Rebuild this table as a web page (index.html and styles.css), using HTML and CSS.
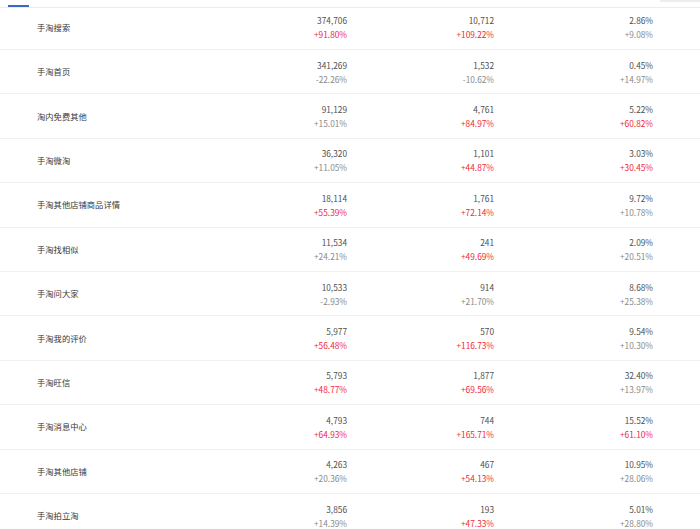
FILE: index.html
```html
<!DOCTYPE html>
<html lang="zh-CN">
<head>
<meta charset="utf-8">
<title>流量来源</title>
<link rel="stylesheet" href="styles.css">
</head>
<body>
<div class="page">
  <div class="tabbar">
    <div class="tab-active"></div>
    <div class="tool-edge"></div>
  </div>
  <div class="rows">
    <div class="row row-first">
      <div class="label">手淘搜索</div>
      <div class="cell"><span class="num">374,706</span><span class="pct up">+91.80%</span></div>
      <div class="cell"><span class="num">10,712</span><span class="pct up">+109.22%</span></div>
      <div class="cell"><span class="num">2.86%</span><span class="pct">+9.08%</span></div>
    </div>
    <div class="row">
      <div class="label">手淘首页</div>
      <div class="cell"><span class="num">341,269</span><span class="pct">-22.26%</span></div>
      <div class="cell"><span class="num">1,532</span><span class="pct">-10.62%</span></div>
      <div class="cell"><span class="num">0.45%</span><span class="pct">+14.97%</span></div>
    </div>
    <div class="row">
      <div class="label">淘内免费其他</div>
      <div class="cell"><span class="num">91,129</span><span class="pct">+15.01%</span></div>
      <div class="cell"><span class="num">4,761</span><span class="pct up">+84.97%</span></div>
      <div class="cell"><span class="num">5.22%</span><span class="pct up">+60.82%</span></div>
    </div>
    <div class="row">
      <div class="label">手淘微淘</div>
      <div class="cell"><span class="num">36,320</span><span class="pct">+11.05%</span></div>
      <div class="cell"><span class="num">1,101</span><span class="pct up">+44.87%</span></div>
      <div class="cell"><span class="num">3.03%</span><span class="pct up">+30.45%</span></div>
    </div>
    <div class="row">
      <div class="label">手淘其他店铺商品详情</div>
      <div class="cell"><span class="num">18,114</span><span class="pct up">+55.39%</span></div>
      <div class="cell"><span class="num">1,761</span><span class="pct up">+72.14%</span></div>
      <div class="cell"><span class="num">9.72%</span><span class="pct">+10.78%</span></div>
    </div>
    <div class="row">
      <div class="label">手淘找相似</div>
      <div class="cell"><span class="num">11,534</span><span class="pct">+24.21%</span></div>
      <div class="cell"><span class="num">241</span><span class="pct up">+49.69%</span></div>
      <div class="cell"><span class="num">2.09%</span><span class="pct">+20.51%</span></div>
    </div>
    <div class="row">
      <div class="label">手淘问大家</div>
      <div class="cell"><span class="num">10,533</span><span class="pct">-2.93%</span></div>
      <div class="cell"><span class="num">914</span><span class="pct">+21.70%</span></div>
      <div class="cell"><span class="num">8.68%</span><span class="pct">+25.38%</span></div>
    </div>
    <div class="row">
      <div class="label">手淘我的评价</div>
      <div class="cell"><span class="num">5,977</span><span class="pct up">+56.48%</span></div>
      <div class="cell"><span class="num">570</span><span class="pct up">+116.73%</span></div>
      <div class="cell"><span class="num">9.54%</span><span class="pct">+10.30%</span></div>
    </div>
    <div class="row">
      <div class="label">手淘旺信</div>
      <div class="cell"><span class="num">5,793</span><span class="pct up">+48.77%</span></div>
      <div class="cell"><span class="num">1,877</span><span class="pct up">+69.56%</span></div>
      <div class="cell"><span class="num">32.40%</span><span class="pct">+13.97%</span></div>
    </div>
    <div class="row">
      <div class="label">手淘消息中心</div>
      <div class="cell"><span class="num">4,793</span><span class="pct up">+64.93%</span></div>
      <div class="cell"><span class="num">744</span><span class="pct up">+165.71%</span></div>
      <div class="cell"><span class="num">15.52%</span><span class="pct up">+61.10%</span></div>
    </div>
    <div class="row">
      <div class="label">手淘其他店铺</div>
      <div class="cell"><span class="num">4,263</span><span class="pct">+20.36%</span></div>
      <div class="cell"><span class="num">467</span><span class="pct up">+54.13%</span></div>
      <div class="cell"><span class="num">10.95%</span><span class="pct">+28.06%</span></div>
    </div>
    <div class="row">
      <div class="label">手淘拍立淘</div>
      <div class="cell"><span class="num">3,856</span><span class="pct">+14.39%</span></div>
      <div class="cell"><span class="num">193</span><span class="pct up">+47.33%</span></div>
      <div class="cell"><span class="num">5.01%</span><span class="pct">+28.80%</span></div>
    </div>
  </div>
</div>
</body>
</html>
```
FILE: styles.css
```css
html, body {
  margin: 0;
  padding: 0;
  background: #ffffff;
  overflow: hidden;
}

body {
  font-family: "Noto Sans CJK SC", "Noto Sans", sans-serif;
  font-size: 8.3px;
  color: #444;
}

.page {
  width: 700px;
  height: 529px;
  overflow: hidden;
}

.tabbar {
  height: 8px;
  box-sizing: border-box;
  display: flex;
  justify-content: space-between;
  align-items: flex-end;
  padding-left: 8px;
  border-bottom: 1px solid #ececec;
}

.tab-active {
  width: 21px;
  height: 2px;
  background: #3a66c6;
}

.tool-edge {
  align-self: flex-start;
  width: 40px;
  height: 2px;
  background: #ededed;
}

.rows {
  display: flex;
  flex-direction: column;
}

.row {
  display: grid;
  grid-template-columns: 200px 110px 147px 159px;
  align-items: center;
  height: 44.4px;
  box-sizing: border-box;
  padding-left: 37px;
  border-bottom: 1px solid #f0f0f0;
}

.row-first {
  height: 42px;
  padding-bottom: 3px;
}

.label {
  color: #383838;
  white-space: nowrap;
  margin-top: -1px;
}

.cell {
  display: flex;
  flex-direction: column;
  align-items: flex-end;
  line-height: 14px;
}

.num {
  color: #505050;
}

.pct {
  color: #8a8a8a;
}

.pct.up {
  color: #f0283c;
}
```
